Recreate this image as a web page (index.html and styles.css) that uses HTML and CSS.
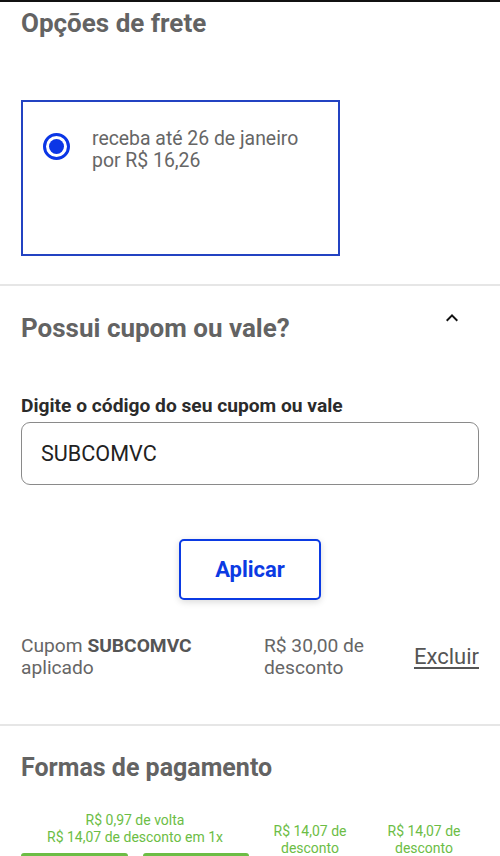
FILE: index.html
```html
<!DOCTYPE html>
<html lang="pt-BR">
<head>
  <meta charset="UTF-8" />
  <meta name="viewport" content="width=device-width, initial-scale=1.0" />
  <title>Checkout | Frete e pagamento</title>
  <link rel="stylesheet" href="styles.css">
</head>
<body>
  <div class="top-line"></div>

  <!-- Frete -->
  <section class="block frete">
    <h2 class="block-title">Opções de frete</h2>
    <label class="ship-option">
      <span class="radio"><span class="radio-dot"></span></span>
      <span class="ship-text">receba até 26 de janeiro<br />por R$ 16,26</span>
    </label>
  </section>

  <hr class="divider" />

  <!-- Cupom -->
  <section class="block cupom">
    <div class="block-head">
      <h2 class="block-title">Possui cupom ou vale?</h2>
      <svg class="chevron" width="24" height="24" viewBox="0 0 24 24">
        <path d="M12 8l-6 6 1.41 1.41L12 10.83l4.59 4.58L18 14z" fill="#111" />
      </svg>
    </div>
    <label class="field-label" for="coupon">Digite o código do seu cupom ou vale</label>
    <input type="text" id="coupon" class="coupon-input" value="SUBCOMVC" />
    <div class="btn-wrap">
      <button class="btn-outline">Aplicar</button>
    </div>
    <div class="applied">
      <span>Cupom <b>SUBCOMVC</b><br />aplicado</span>
      <span>R$ 30,00 de<br />desconto</span>
      <a href="#" class="remove">Excluir</a>
    </div>
  </section>

  <hr class="divider" />

  <!-- Pagamento -->
  <section class="block pagamento">
    <h2 class="block-title">Formas de pagamento</h2>
    <div class="offers">
      <div class="offer offer-wide">
        <p class="offer-note">R$ 0,97 de volta<br />R$ 14,07 de desconto em 1x</p>
        <div class="pay-cards">
          <div class="pay-card"></div>
          <div class="pay-card"></div>
        </div>
      </div>
      <div class="offer">
        <p class="offer-note">R$ 14,07 de<br />desconto</p>
      </div>
      <div class="offer">
        <p class="offer-note">R$ 14,07 de<br />desconto</p>
      </div>
    </div>
  </section>
</body>
</html>
```

FILE: styles.css
```css
body {
  margin: 0;
  height: 856px;
  overflow: hidden;
  font-family: Roboto, "Liberation Sans", sans-serif;
  background: #fff;
  color: #666;
}
.top-line {
  height: 2px;
  background: #111;
}
.block {
  padding: 0 21px;
}
.block-title {
  margin: 0;
  font-size: 26px;
  line-height: 30px;
  font-weight: 700;
  color: #636363;
}
.frete .block-title {
  margin-top: 6px;
}
.ship-option {
  display: flex;
  align-items: flex-start;
  gap: 22px;
  box-sizing: border-box;
  width: 319px;
  height: 156px;
  margin-top: 62px;
  padding: 26px 0 0 20px;
  border: 2px solid #2343c2;
}
.radio {
  display: flex;
  align-items: center;
  justify-content: center;
  flex: none;
  box-sizing: border-box;
  width: 27px;
  height: 27px;
  margin-top: 5px;
  border: 3px solid #0b36e6;
  border-radius: 50%;
}
.radio-dot {
  width: 15px;
  height: 15px;
  border-radius: 50%;
  background: #0b36e6;
}
.ship-text {
  font-size: 19.4px;
  line-height: 22px;
  color: #666;
}
.divider {
  margin: 28px 0 0;
  border: none;
  height: 2px;
  background: #e6e6e6;
}
.cupom {
  padding-top: 27px;
}
.block-head {
  display: flex;
  justify-content: space-between;
  align-items: flex-start;
}
.chevron {
  margin: -7px 15px 0 0;
}
.field-label {
  display: block;
  margin-top: 52px;
  font-size: 19.2px;
  line-height: 22px;
  font-weight: 700;
  color: #2b2b2b;
}
.coupon-input {
  display: block;
  box-sizing: border-box;
  width: 100%;
  height: 63px;
  margin-top: 5px;
  padding: 0 19px;
  border: 1px solid #8a8a8a;
  border-radius: 9px;
  font-family: inherit;
  font-size: 21.6px;
  color: #222;
  outline: none;
}
.btn-wrap {
  display: flex;
  justify-content: center;
  margin-top: 54px;
}
.btn-outline {
  width: 142px;
  height: 61px;
  background: #fff;
  border: 2.5px solid #0b3ae3;
  border-radius: 5px;
  box-shadow: 0 2px 7px rgba(0, 0, 0, 0.15);
  font-family: inherit;
  font-size: 22px;
  font-weight: 700;
  color: #0b3ae3;
}
.applied {
  display: grid;
  grid-template-columns: 243px 1fr auto;
  align-items: center;
  margin-top: 35px;
  font-size: 19.2px;
  line-height: 22px;
  color: #666;
}
.applied b {
  color: #555;
}
.remove {
  font-size: 22px;
  line-height: 26px;
  color: #555;
  text-decoration: underline;
  text-underline-offset: 3px;
}
.cupom + .divider {
  margin-top: 45px;
}
.pagamento {
  padding-top: 27px;
}
.pagamento .block-title {
  font-size: 25px;
}
.offers {
  display: flex;
  gap: 8px;
  margin-top: 29px;
}
.offer {
  width: 106px;
  text-align: center;
}
.offer-wide {
  width: 228px;
}
.offer-note {
  margin: 0;
  font-size: 14px;
  line-height: 17px;
  color: #6cbd45;
}
.offer:not(.offer-wide) .offer-note {
  margin-top: 11px;
}
.pay-cards {
  display: flex;
  gap: 15px;
  margin-top: 7px;
}
.pay-card {
  width: 107px;
  height: 48px;
  border-top: 3px solid #6cbd45;
  border-radius: 3px;
}
```
